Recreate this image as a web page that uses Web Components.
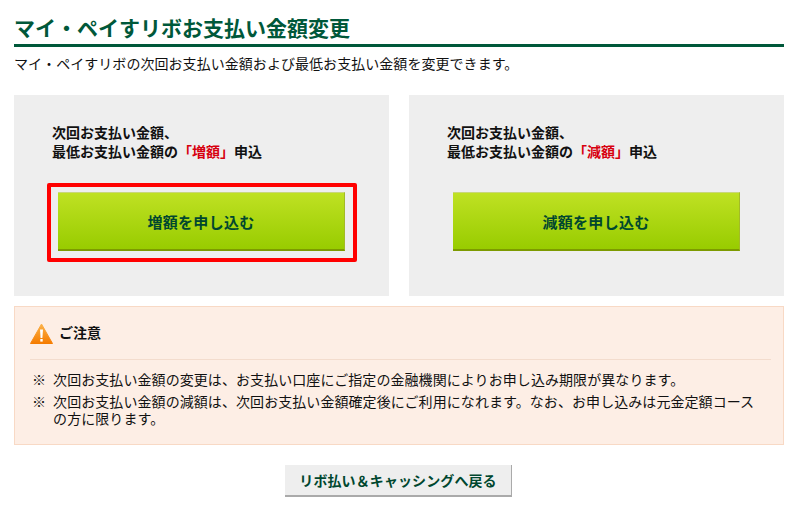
<!DOCTYPE html>
<html lang="ja">
<head>
<meta charset="utf-8">
<title>マイ・ペイすリボお支払い金額変更</title>
<style>
  html, body { margin: 0; background: #fff; }
  body {
    font-family: "Noto Sans CJK JP", "Liberation Sans", sans-serif;
    color: #111;
  }
</style>
</head>
<body>
<revo-page>
  <page-title slot="title">マイ・ペイすリボお支払い金額変更</page-title>
  <span slot="lead">マイ・ペイすリボの次回お支払い金額および最低お支払い金額を変更できます。</span>
  <apply-card slot="cards" word="増額" label="増額を申し込む" highlight></apply-card>
  <apply-card slot="cards" word="減額" label="減額を申し込む"></apply-card>
  <notice-box slot="notice">
    <span slot="heading">ご注意</span>
    <note-item>次回お支払い金額の変更は、お支払い口座にご指定の金融機関によりお申し込み期限が異なります。</note-item>
    <note-item>次回お支払い金額の減額は、次回お支払い金額確定後にご利用になれます。なお、お申し込みは元金定額コースの方に限ります。</note-item>
  </notice-box>
  <back-button slot="back">リボ払い＆キャッシングへ戻る</back-button>
</revo-page>

<script>
class RevoPage extends HTMLElement {
  constructor() {
    super();
    this.root = this.attachShadow({ mode: "open" });
    this.root.innerHTML = `
      <style>
        :host { display: block; width: 770px; padding: 14px 16px 0 14px; }
        .lead { font-size: 14px; line-height: 20px; letter-spacing: 0.05px; margin: 6px 0 22px; }
        .cards { display: flex; gap: 20px; margin-bottom: 10px; }
        .back { display: flex; justify-content: center; margin-top: 20px; padding-right: 1px; }
      </style>
      <slot name="title"></slot>
      <div class="lead"><slot name="lead"></slot></div>
      <div class="cards"><slot name="cards"></slot></div>
      <slot name="notice"></slot>
      <div class="back"><slot name="back"></slot></div>
    `;
  }
}

class PageTitle extends HTMLElement {
  constructor() {
    super();
    this.root = this.attachShadow({ mode: "open" });
    this.root.innerHTML = `
      <style>
        :host {
          display: block;
          height: 30px;
          border-bottom: 3px solid #00583a;
          color: #00583a;
          font-size: 21px;
          font-weight: 700;
          line-height: 26px;
        }
      </style>
      <slot></slot>
    `;
  }
}

class ApplyCard extends HTMLElement {
  constructor() {
    super();
    this.root = this.attachShadow({ mode: "open" });
  }

  connectedCallback() {
    const word = this.getAttribute("word");
    const label = this.getAttribute("label");
    this.root.innerHTML = `
      <style>
        :host {
          display: block;
          flex: 1;
          height: 201px;
          box-sizing: border-box;
          padding: 28px 44px 0 38px;
          background: #eee;
        }
        p {
          margin: 0 0 31px;
          font-size: 14px;
          font-weight: 700;
          line-height: 19px;
        }
        em { font-style: normal; color: #d7000f; }
        .frame {
          position: relative;
          width: 287px;
          height: 59px;
          margin-left: 6px;
        }
        /* red marker drawn over the card, not centred on the button in the original */
        :host([highlight]) .frame::after {
          content: "";
          position: absolute;
          inset: -9px -12px -11px -11px;
          border: 4px solid #f00;
          border-radius: 2px;
        }
        .go {
          display: flex;
          align-items: center;
          justify-content: center;
          box-sizing: border-box;
          height: 59px;
          border-top: 1px solid #c9d77a;
          border-bottom: 2px solid #7d9a00;
          border-right: 1px solid #a3bb26;
          background: linear-gradient(#bfe123, #98cc00);
          color: #00472f;
          font-size: 15px;
          font-weight: 700;
          letter-spacing: 0.3px;
        }
      </style>
      <p>次回お支払い金額、<br>最低お支払い金額の<em>「${word}」</em>申込</p>
      <div class="frame"><div class="go">${label}</div></div>
    `;
  }
}

class NoticeBox extends HTMLElement {
  constructor() {
    super();
    this.root = this.attachShadow({ mode: "open" });
    this.root.innerHTML = `
      <style>
        :host {
          display: block;
          box-sizing: border-box;
          height: 139px;
          padding: 0 12px 0 15px;
          background: #fdeee5;
          border: 1px solid #f8d9c5;
        }
        .head {
          display: flex;
          align-items: center;
          gap: 6px;
          height: 52px;
          border-bottom: 1px solid #f3dccd;
          font-size: 14px;
          font-weight: 700;
        }
        .head span { padding-bottom: 2px; }
        svg { display: block; }
        .list { padding: 11px 10px 0 2px; }
      </style>
      <div class="head">
        <svg width="23" height="21" viewBox="0 0 23 21">
          <defs>
            <linearGradient id="warn" x1="0" y1="0" x2="0" y2="1">
              <stop offset="0" stop-color="#fbb24a"/>
              <stop offset="1" stop-color="#f57c00"/>
            </linearGradient>
          </defs>
          <path d="M11.5 1 L22.5 20.5 H0.5 Z" fill="url(#warn)" stroke="url(#warn)" stroke-linejoin="round"/>
          <path d="M10 6.5 H13 L12.4 15 H10.6 Z" fill="#fff"/>
          <rect x="10.3" y="16" width="2.4" height="2.6" fill="#fff"/>
        </svg>
        <span><slot name="heading"></slot></span>
      </div>
      <div class="list"><slot></slot></div>
    `;
  }
}

class NoteItem extends HTMLElement {
  constructor() {
    super();
    this.root = this.attachShadow({ mode: "open" });
    this.root.innerHTML = `
      <style>
        :host {
          display: flex;
          gap: 7px;
          margin-bottom: 5px;
          font-size: 14px;
          line-height: 17px;
          letter-spacing: 0.07px;
        }
      </style>
      <span>※</span>
      <span><slot></slot></span>
    `;
  }
}

class BackButton extends HTMLElement {
  constructor() {
    super();
    this.root = this.attachShadow({ mode: "open" });
    this.root.innerHTML = `
      <style>
        :host {
          display: flex;
          align-items: center;
          justify-content: center;
          box-sizing: border-box;
          width: 227px;
          height: 32px;
          background: #eee;
          border-right: 1px solid #aaa;
          border-bottom: 2px solid #aaa;
          color: #00472f;
          font-size: 14px;
          font-weight: 700;
          letter-spacing: 0.1px;
        }
      </style>
      <slot></slot>
    `;
  }
}

customElements.define("revo-page", RevoPage);
customElements.define("page-title", PageTitle);
customElements.define("apply-card", ApplyCard);
customElements.define("notice-box", NoticeBox);
customElements.define("note-item", NoteItem);
customElements.define("back-button", BackButton);
</script>
</body>
</html>
